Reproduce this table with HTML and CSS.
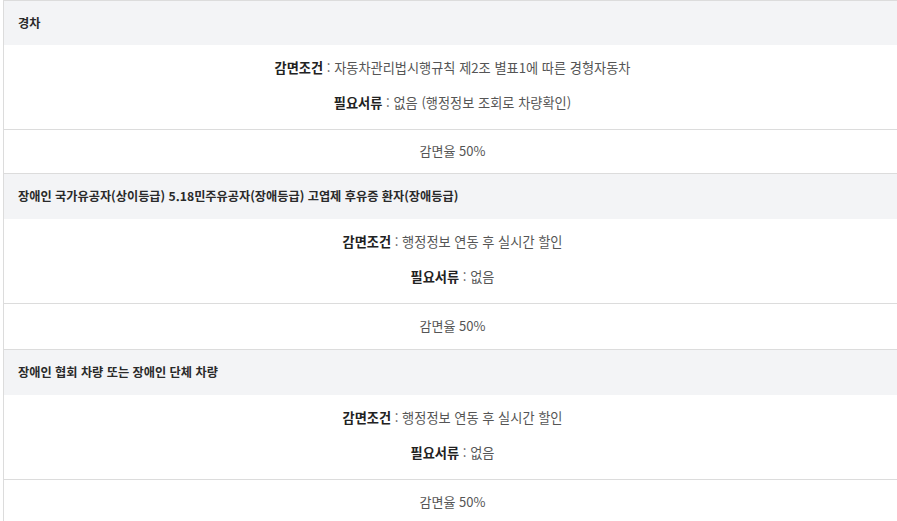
FILE: index.html
```html
<!DOCTYPE html>
<html lang="ko">
<head>
<meta charset="utf-8">
<link rel="stylesheet" href="styles.css">
</head>
<body>
<div class="table">
  <div class="head head-first">경차</div>
  <div class="body">
    <p><b>감면조건</b> : 자동차관리법시행규칙 제2조 별표1에 따른 경형자동차</p>
    <p><b>필요서류</b> : 없음 (행정정보 조회로 차량확인)</p>
  </div>
  <div class="rate rate-first">감면율 50%</div>

  <div class="head">장애인 국가유공자(상이등급) 5.18민주유공자(장애등급) 고엽제 후유증 환자(장애등급)</div>
  <div class="body">
    <p><b>감면조건</b> : 행정정보 연동 후 실시간 할인</p>
    <p><b>필요서류</b> : 없음</p>
  </div>
  <div class="rate">감면율 50%</div>

  <div class="head">장애인 협회 차량 또는 장애인 단체 차량</div>
  <div class="body">
    <p><b>감면조건</b> : 행정정보 연동 후 실시간 할인</p>
    <p><b>필요서류</b> : 없음</p>
  </div>
  <div class="rate">감면율 50%</div>
</div>
</body>
</html>
```

FILE: styles.css
```css
html, body {
  margin: 0;
  padding: 0;
  background: #fff;
}
body {
  font-family: "Noto Sans CJK KR", "Noto Sans", sans-serif;
  color: #555;
  overflow: hidden;
}
.table {
  margin-left: 3px;
  width: 920px;
  border-left: 1px solid #dcdcdc;
  border-top: 1px solid #dcdcdc;
}
.head {
  height: 45px;
  box-sizing: border-box;
  display: flex;
  align-items: center;
  padding-left: 14px;
  padding-bottom: 1px;
  background: #f3f4f6;
  font-size: 12.2px;
  font-weight: 700;
  color: #2a2a2a;
}
.head-first {
  height: 44px;
}
.body {
  height: 85px;
  box-sizing: border-box;
  display: flex;
  flex-direction: column;
  align-items: center;
  justify-content: center;
  gap: 16px;
  padding-bottom: 4px;
  border-bottom: 1px solid #dcdcdc;
  width: 897px;
  font-size: 13.2px;
}
.body p {
  margin: 0;
  line-height: 19px;
}
.body b {
  color: #222;
  font-weight: 700;
}
.rate {
  height: 46px;
  box-sizing: border-box;
  display: flex;
  align-items: center;
  justify-content: center;
  padding-bottom: 3px;
  width: 897px;
  font-size: 13px;
  border-bottom: 1px solid #dcdcdc;
}
.rate-first {
  height: 44px;
}
```
